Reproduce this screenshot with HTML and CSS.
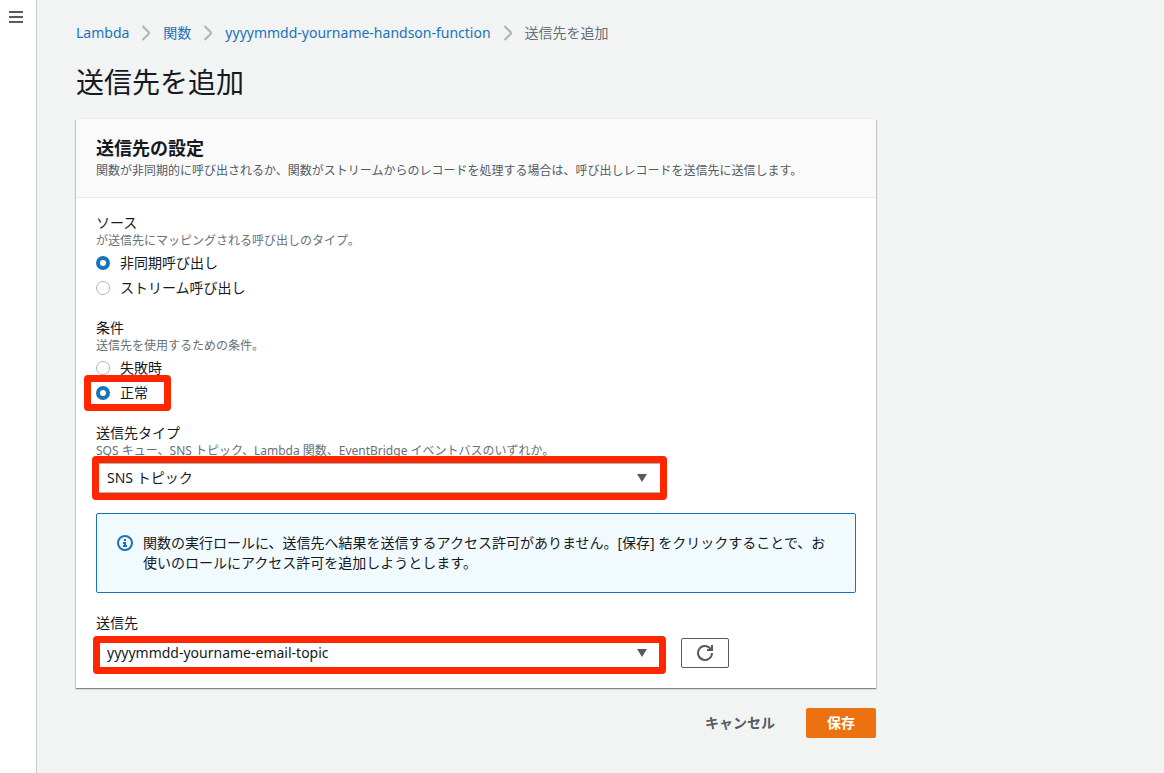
FILE: index.html
```html
<!doctype html>
<html lang="ja">
<head>
    <meta charset="UTF-8" />
    <meta name="viewport" content="width=device-width, initial-scale=1.0">
    <title>送信先を追加 - Lambda</title>
    <link rel="stylesheet" href="styles.css">
</head>
<body>
    <div id="container">
        <div id="side">
            <button type="button" class="btn_menu" aria-label="メニュー">
                <svg width="14" height="12" viewBox="0 0 14 12"><path d="M0 1h14M0 6h14M0 11h14" stroke="#545b64" stroke-width="2"/></svg>
            </button>
        </div>
        <main id="main">
            <nav class="breadcrumb">
                <a href="#">Lambda</a>
                <svg width="8" height="16" viewBox="0 0 8 16"><path d="M0.5 1L7.5 8L0.5 15"/></svg>
                <a href="#">関数</a>
                <svg width="8" height="16" viewBox="0 0 8 16"><path d="M0.5 1L7.5 8L0.5 15"/></svg>
                <a href="#">yyyymmdd-yourname-handson-function</a>
                <svg width="8" height="16" viewBox="0 0 8 16"><path d="M0.5 1L7.5 8L0.5 15"/></svg>
                <span>送信先を追加</span>
            </nav>
            <h1>送信先を追加</h1>
            <form id="form">
                <div class="card">
                    <div class="card_header">
                        <h2>送信先の設定</h2>
                        <p>関数が非同期的に呼び出されるか、関数がストリームからのレコードを処理する場合は、呼び出しレコードを送信先に送信します。</p>
                    </div>
                    <div class="card_body">
                        <fieldset>
                            <legend>ソース</legend>
                            <p class="hint">が送信先にマッピングされる呼び出しのタイプ。</p>
                            <div class="radio_list">
                                <label class="radio"><input type="radio" name="source" checked>非同期呼び出し</label>
                                <label class="radio"><input type="radio" name="source">ストリーム呼び出し</label>
                            </div>
                        </fieldset>
                        <fieldset>
                            <legend>条件</legend>
                            <p class="hint">送信先を使用するための条件。</p>
                            <div class="radio_list">
                                <label class="radio"><input type="radio" name="condition">失敗時</label>
                                <label class="radio marked"><input type="radio" name="condition" checked>正常</label>
                            </div>
                        </fieldset>
                        <div class="field">
                            <label class="label" for="type">送信先タイプ</label>
                            <p class="hint">SQS キュー、SNS トピック、Lambda 関数、EventBridge イベントバスのいずれか。</p>
                            <div class="select_box marked">
                                <select id="type">
                                    <option>SNS トピック</option>
                                </select>
                                <svg width="10" height="8" viewBox="0 0 10 8"><path d="M0 0h10L5 8z" fill="#545b64"/></svg>
                            </div>
                        </div>
                        <div class="alert">
                            <svg width="16" height="16" viewBox="0 0 16 16" fill="none" stroke="#1a73ba" stroke-width="2"><circle cx="8" cy="8" r="7"/><path d="M7 5h2M6 8h2v3M6 11h4"/></svg>
                            <p>関数の実行ロールに、送信先へ結果を送信するアクセス許可がありません。[保存] をクリックすることで、お使いのロールにアクセス許可を追加しようとします。</p>
                        </div>
                        <div class="field">
                            <label class="label" for="dest">送信先</label>
                            <div class="row">
                                <div class="select_box marked dest">
                                    <select id="dest">
                                        <option>yyyymmdd-yourname-email-topic</option>
                                    </select>
                                    <svg width="10" height="8" viewBox="0 0 10 8"><path d="M0 0h10L5 8z" fill="#545b64"/></svg>
                                </div>
                                <button type="button" class="btn_refresh" aria-label="更新">
                                    <svg width="16" height="16" viewBox="0 0 16 16" fill="none" stroke="#545b64" stroke-width="2"><path d="M15 8a7 7 0 1 1-2.2-5.1L15 5M15 0v5h-5"/></svg>
                                </button>
                            </div>
                        </div>
                    </div>
                </div>
                <div class="actions">
                    <button type="button" class="btn_cancel">キャンセル</button>
                    <button type="submit" class="btn_save">保存</button>
                </div>
            </form>
        </main>
    </div>
</body>
</html>
```
FILE: styles.css
```css
* { margin: 0; padding: 0; box-sizing: border-box; }
body { font-family: "Noto Sans", "Noto Sans CJK JP", sans-serif; font-size: 14px; line-height: 20px; color: #16191f; background: #f2f3f3; }
a { color: #1a73ba; text-decoration: none; }
button, select { font: inherit; }
button { cursor: pointer; }
svg { display: block; flex: none; }
fieldset { border: 0; }

#container { display: flex; min-height: 100vh; }
#side { flex: none; width: 36px; padding-top: 11px; background: #fff; }
#main { flex: 1; min-width: 0; padding: 23px 39px; border-left: 1px solid #c5cccc; }
#form { max-width: 800px; }

.btn_menu { display: block; padding: 0 9px; border: 0; background: transparent; }

.breadcrumb { display: flex; flex-wrap: wrap; align-items: center; gap: 0 13px; color: #687078; }
.breadcrumb svg { fill: none; stroke: #aab7b8; stroke-width: 2; }

h1 { margin: 20px 0 18px; font-size: 28px; font-weight: normal; line-height: 38px; }

.card { background: #fff; box-shadow: 0 -1px 0 0 #eaeded, 0 1px 1px 0 rgba(0, 28, 36, .3), 1px 1px 1px 0 rgba(0, 28, 36, .15), -1px 1px 1px 0 rgba(0, 28, 36, .15); }
.card_header { padding: 18px 20px; border-bottom: 1px solid #eaeded; background: #fafafa; }
.card_header h2 { font-size: 18px; line-height: 22px; }
.card_header p { font-size: 12px; line-height: 20px; padding-top: 2px; margin-bottom: -2px; color: #545b64; }
.card_body { display: flex; flex-direction: column; gap: 20px; padding: 15px 20px 20px; }

legend, .label { display: block; line-height: 20px; }
.hint { font-size: 12px; line-height: 15px; color: #687078; }

.radio_list { display: flex; flex-direction: column; align-items: flex-start; gap: 5px; margin-top: 5px; }
.radio { position: relative; display: flex; align-items: center; gap: 10px; }
.radio input { appearance: none; width: 14px; height: 14px; border: 1px solid #aab7b8; border-radius: 50%; background: #fff; }
.radio input:checked { border: 4px solid #1a73ba; }

.select_box { position: relative; width: calc(75% - 5px); margin-top: 5px; }
.select_box select { display: block; appearance: none; width: 100%; height: 30px; padding: 0 40px 0 10px; border: 1px solid #aab7b8; border-radius: 2px; color: #16191f; background: #fff; }
.select_box svg { position: absolute; right: 14px; top: 11px; pointer-events: none; }
.row { display: flex; gap: 20px; margin-top: 5px; }
.row .select_box { margin-top: 0; }
.btn_refresh { display: flex; align-items: center; justify-content: center; width: 48px; height: 30px; border: 1px solid #545b64; border-radius: 2px; background: #fff; }

/* red frames around the values to pick */
.marked::after { content: ""; position: absolute; inset: -7px -6px -7px -4px; border: 7px solid #ff2600; border-radius: 4px; pointer-events: none; }
.radio.marked::after { inset: -8px -23px -8px -12px; }
.dest.marked::after { inset: -2px -5px -6px -3px; }

.alert { display: flex; gap: 10px; padding: 19px 20px; border: 1px solid #1a73ba; border-radius: 2px; background: #f1faff; }
.alert svg { margin-top: 2px; }

.actions { display: flex; justify-content: flex-end; gap: 10px; margin-top: 20px; }
.actions button { height: 30px; padding: 0 20px; border: 1px solid transparent; border-radius: 2px; font-weight: bold; }
.btn_cancel { color: #545b64; background: transparent; }
.actions .btn_save { border-color: #ec7211; color: #fff; background: #ec7211; }
```
